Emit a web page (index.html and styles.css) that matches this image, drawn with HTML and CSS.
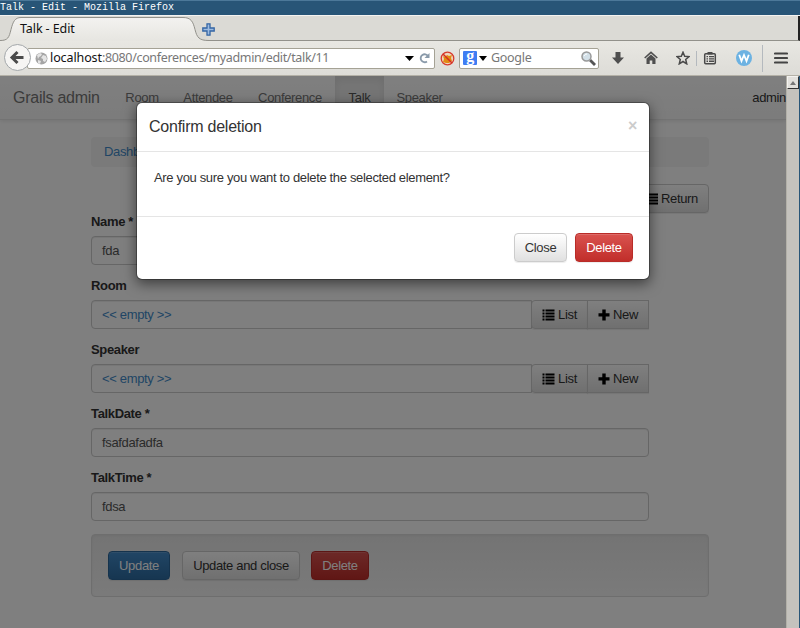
FILE: index.html
```html
<!DOCTYPE html>
<html lang="en">
<head>
<meta charset="utf-8">
<title>Talk - Edit</title>
<link rel="stylesheet" href="styles.css">
</head>
<body>
<svg class="defs" width="0" height="0">
  <symbol id="list" viewBox="0 0 12 12"><path d="M0 .5h2v2H0zM3 .5h9v2H3zM0 3.5h2v2H0zM3 3.5h9v2H3zM0 6.5h2v2H0zM3 6.5h9v2H3zM0 9.5h2v2H0zM3 9.5h9v2H3z"/></symbol>
  <symbol id="plus" viewBox="0 0 12 12"><path d="M4.3.5h3.4v3.8h3.8v3.2H7.7v4H4.3v-4H.5V4.3h3.8z"/></symbol>
  <linearGradient id="tabfill" x1="0" y1="0" x2="0" y2="1"><stop offset="0" stop-color="#f3f2f0"/><stop offset="1" stop-color="#e6e5e0"/></linearGradient>
</svg>
<div class="window">
  <div class="titlebar">Talk - Edit - Mozilla Firefox</div>
  <div class="tabstrip">
    <svg class="tabshape" width="210" height="26" viewBox="0 0 210 26"><path d="M0 24.5c8 0 9-3 11-11S15 1.500 21 1.500H183c8 0 10 4 12 12s4 11 14 11V26H0z" fill="url(#tabfill)"/><path d="M0 24.500c8 0 9-3 11-11S15 1.500 21 1.500H183c8 0 10 4 12 12s4 11 14 11" fill="none" stroke="#92918b"/></svg>
    <span class="tabtitle">Talk - Edit</span>
    <svg class="newtab" width="13" height="13" viewBox="0 0 13 13"><path d="M5 .8h3V5h4.200v3H8v4.200H5V8H.8V5H5z" fill="#9dbbe0" stroke="#3465a4" stroke-width="1.300"/></svg>
  </div>
  <div class="toolbar">
    <svg class="back" width="30" height="30" viewBox="0 0 30 30"><circle cx="14.500" cy="14.500" r="13" fill="#f6f5f3" stroke="#a3a7aa"/><path d="M9.500 14.500H20.500M14.500 9l-5.500 5.500 5.500 5.500" fill="none" stroke="#4b4b4b" stroke-width="3"/></svg>
    <div class="urlbar">
      <svg width="13" height="13" viewBox="0 0 13 13"><circle cx="6.500" cy="6.500" r="6" fill="#a5a5a5"/><path d="M2 3l3-2 2 1-1 2-2 1-1 2zM8 3l3 1 1 3-2 3-2-1V7L6 6zM3 8l3 1-1 3-2-1z" fill="#e4e4e4"/></svg>
      <span class="url"><b>localhost</b>:8080/conferences/myadmin/edit/talk/11</span>
      <svg width="9" height="5" viewBox="0 0 9 5"><path d="M0 0h9L4.500 5z"/></svg>
      <svg class="reload" width="12" height="12" viewBox="0 0 12 12"><path d="M8 9.500A4 4 0 1 1 9 4" fill="none" stroke="#8a9aaa" stroke-width="1.800"/><path d="M10.500 1v5H5.500z" fill="#8a9aaa"/></svg>
    </div>
    <svg class="blocker" width="15" height="15" viewBox="0 0 15 15"><circle cx="7.500" cy="7.500" r="6.300" fill="#efd6bd"/><path d="M3 5l2 1 2-2 2 1 3-1-1 3 1 3-3 2H6l-3-1 1-3z" fill="#e18a12"/><path d="M3 3l9 9" stroke="#d62d20" stroke-width="1.500"/><circle cx="7.500" cy="7.500" r="6.300" fill="none" stroke="#d63a2d" stroke-width="1.300"/></svg>
    <div class="search">
      <span class="glogo">g</span>
      <svg width="8" height="5" viewBox="0 0 8 5"><path d="M0 0h8L4 5z"/></svg>
      <span class="hint">Google</span>
      <svg width="15" height="15" viewBox="0 0 15 15"><path d="M9 9l5 5" stroke="#555" stroke-width="2.800"/><circle cx="5.500" cy="5.500" r="4.500" fill="#d3e0e8" stroke="#989898" stroke-width="1.500"/><path d="M3 5q1-2 3-2" fill="none" stroke="#fff"/></svg>
    </div>
    <div class="tools">
      <svg width="14" height="14" viewBox="0 0 14 14"><path d="M4.500 1h5v5.500H13L7 13 1 6.500h3.500z" fill="#4f4f4f"/></svg>
      <svg width="14" height="14" viewBox="0 0 14 14"><path d="M.7 7L7 1.300 13.300 7" fill="none" stroke="#4f4f4f" stroke-width="1.600"/><path d="M2.500 7.600L7 3.600l4.500 4V13H8.300V9.500H5.700V13H2.500z" fill="#4f4f4f"/></svg>
      <svg width="14" height="14" viewBox="0 0 14 14"><path d="M7 1.200l1.700 4 4.300.4-3.300 2.900 1 4.300L7 10.500l-3.700 2.300 1-4.300L1 5.600l4.300-.4z" fill="none" stroke="#4a4a4a" stroke-width="1.500"/></svg>
      <svg width="14" height="14" viewBox="0 0 14 14"><rect x="1.700" y="2.700" width="10.600" height="10" rx="1" fill="none" stroke="#4a4a4a" stroke-width="1.500"/><path d="M4.500 1h5v2.500h-5zM3.500 5h1.500v1.300H3.500zM6 5h5v1.300H6zM3.500 7.300h1.500v1.300H3.500zM6 7.300h5v1.300H6zM3.500 9.600h1.500v1.300H3.500zM6 9.600h5v1.300H6z" fill="#4a4a4a"/></svg>
      <svg width="16" height="16" viewBox="0 0 16 16"><circle cx="8" cy="8" r="8" fill="#6cb2e2"/><path d="M3.200 4.700L5.500 11 8 5l2.500 6 2.300-6.300" fill="none" stroke="#fff" stroke-width="1.800"/></svg>
      <svg class="menu" width="14" height="12" viewBox="0 0 14 12"><path d="M1 1.500h12M1 6h12M1 10.500h12" stroke="#444" stroke-width="2.200" stroke-linecap="round"/></svg>
      <i class="sep sep-a"></i><i class="sep sep-b"></i>
    </div>
  </div>
  <div class="viewport">
    <div class="page">
      <nav class="navbar">
        <span class="brand">Grails admin</span>
        <a class="n-room">Room</a><a class="n-att">Attendee</a><a class="n-conf">Conference</a><a class="n-talk active">Talk</a><a class="n-speak">Speaker</a>
        <span class="user">admin</span>
      </nav>
      <main class="container">
        <div class="breadcrumb">Dashboard</div>
        <div class="actions"><span class="btn"><svg width="12" height="12"><use href="#list"/></svg>Return</span></div>
        <form class="form">
          <label>Name *</label><div class="field">fda</div>
          <label>Room</label>
          <div class="group"><div class="field link">&lt;&lt; empty &gt;&gt;</div><span class="btn b-list"><svg width="13" height="12"><use href="#list"/></svg>List</span><span class="btn b-new"><svg width="12" height="12"><use href="#plus"/></svg>New</span></div>
          <label>Speaker</label>
          <div class="group"><div class="field link">&lt;&lt; empty &gt;&gt;</div><span class="btn b-list"><svg width="13" height="12"><use href="#list"/></svg>List</span><span class="btn b-new"><svg width="12" height="12"><use href="#plus"/></svg>New</span></div>
          <label>TalkDate *</label><div class="field">fsafdafadfa</div>
          <label>TalkTime *</label><div class="field">fdsa</div>
        </form>
        <div class="well"><span class="btn primary">Update</span><span class="btn upclose">Update and close</span><span class="btn danger">Delete</span></div>
      </main>
    </div>
    <div class="backdrop"></div>
    <div class="scrollbar"><div class="up"><svg width="6" height="4" viewBox="0 0 6 4"><path d="M0 4h6L3 0z" fill="#777"/></svg></div></div>
    <section class="modal">
      <header><h4>Confirm deletion</h4><span class="close">×</span></header>
      <p>Are you sure you want to delete the selected element?</p>
      <footer><span class="btn close-btn">Close</span><span class="btn danger">Delete</span></footer>
    </section>
  </div>
</div>
</body>
</html>
```
FILE: styles.css
```css
* { box-sizing: border-box; }
body { margin: 0; width: 800px; height: 628px; overflow: hidden; font: 13px/18px "Liberation Sans", sans-serif; letter-spacing: -.34px; color: #333; }
svg { flex: none; display: block; }
.defs { position: absolute; }
.window { width: 800px; height: 628px; display: flex; flex-direction: column; }
.titlebar { height: 16px; background: #285577; border-top: 1px solid #4c7899; border-bottom: 1px solid #f4f3f1; color: #fff; font: 10px/13px "Liberation Mono", monospace; letter-spacing: 0; white-space: pre; }
.tabstrip { height: 25px; background: #dbdad5; border-bottom: 1px solid #92918b; position: relative; border-right: 2px solid #222; }
.tabshape { position: absolute; left: 0; top: 0; }
.tabtitle { position: absolute; left: 20px; top: 4px; color: #111; font: 12.5px/17px "Noto Sans", sans-serif; letter-spacing: -.1px; }
.newtab { position: absolute; left: 202px; top: 7px; }
.toolbar { height: 35px; background: linear-gradient(#e8e7e2, #dddcd7); border-bottom: 1px solid #b4b1a7; display: flex; align-items: center; position: relative; }
.back { margin-left: 3px; z-index: 1; }
.urlbar { margin-left: -6px; width: 408px; height: 21px; background: #fff; border: 1px solid #a5a295; border-radius: 2px; display: flex; align-items: center; padding: 0 3px 0 7px; font: 12.5px/18px "Noto Sans", sans-serif; letter-spacing: -.34px; color: #777; }
.urlbar b { color: #111; font-weight: 400; letter-spacing: -.1px; }
.url { margin-left: 2px; width: 357px; white-space: nowrap; }
.reload { margin-left: 5px; }
.blocker { margin-left: 5px; }
.search { margin-left: 4px; width: 140px; height: 21px; background: #fff; border: 1px solid #a5a295; border-radius: 2px; display: flex; align-items: center; padding: 0 2px 0 3px; }
.glogo { width: 14px; height: 14px; margin-right: 2px; background: #3f7df3; color: #fff; border-radius: 1px; font: bold 16px/9px "Liberation Serif", serif; text-align: center; }
.hint { margin-left: 4px; flex: 1; color: #777; font: 12.5px/18px "Noto Sans", sans-serif; letter-spacing: -.3px; }
.tools { position: absolute; left: 600px; top: 0; width: 200px; height: 34px; display: grid; grid-template-columns: 36px 29px 36px 18px 49px 28px; justify-items: center; align-items: center; }
.menu { margin-right: 2px; }
.sep { position: absolute; width: 1px; background: #b4b9be; }
.sep-a { left: 96px; top: 10px; height: 15px; }
.sep-b { left: 162px; top: 4px; height: 27px; }
.viewport { height: 552px; position: relative; display: flex; overflow: hidden; }
.page { width: 786px; height: 552px; background: #fff; overflow: hidden; }
.backdrop { position: absolute; left: 0; top: 0; width: 786px; height: 552px; background: rgba(0,0,0,.5); }
.scrollbar { width: 14px; background: #c4c2bd; border-left: 1px solid #b2b0a8; border-right: 1px solid #285577; }
.up { height: 13px; background: #e2e0dc; border: 1px solid #f3f2ef; border-right-color: #333; border-bottom-color: #333; display: flex; align-items: center; justify-content: center; }
.navbar { height: 44px; background: linear-gradient(#fff, #f8f8f8); border-bottom: 1px solid #e7e7e7; box-shadow: 0 1px 4px rgba(0,0,0,.1); display: flex; line-height: 44px; color: #777; }
.brand { width: 113px; padding-left: 13px; font-size: 16px; letter-spacing: -.26px; }
.navbar a { text-align: center; }
.n-room { width: 58px; } .n-att { width: 74px; } .n-conf { width: 90px; } .n-talk { width: 49px; } .n-speak { width: 71px; }
.navbar .active { background: #ebebeb; color: #555; box-shadow: inset 0 3px 9px rgba(0,0,0,.075); }
.user { margin-left: auto; color: #333; }
.container { width: 618px; margin: 17px 0 0 91px; }
.breadcrumb { height: 30px; background: #f5f5f5; border-radius: 4px; color: #428bca; padding: 6px 13px; }
.actions { display: flex; justify-content: flex-end; margin-top: 17px; height: 29px; }
.btn { height: 29px; display: flex; align-items: center; justify-content: center; gap: 3px; padding: 0 10px; border: 1px solid #ccc; border-radius: 4px; background: linear-gradient(#fff, #e0e0e0); box-shadow: inset 0 1px 0 rgba(255,255,255,.15), 0 1px 1px rgba(0,0,0,.075); white-space: nowrap; }
.form { width: 558px; }
.form label { display: block; font-weight: 700; letter-spacing: -.35px; height: 18px; margin-bottom: 5px; }
.field { height: 29px; border: 1px solid #ccc; border-radius: 4px; padding: 5px 10px; color: #555; box-shadow: inset 0 1px 1px rgba(0,0,0,.075); margin-bottom: 12px; }
.group { display: flex; height: 29px; margin-bottom: 12px; }
.group .field { width: 441px; border-radius: 4px 0 0 4px; margin: 0; }
.field.link { color: #428bca; }
.b-list { width: 57px; padding: 0; margin-left: -1px; border-radius: 4px 0 0 4px; }
.b-new { width: 62px; padding: 0; margin-left: -1px; border-radius: 0; }
.well { margin-top: 13px; height: 63px; border: 1px solid #dcdcdc; border-radius: 4px; background: linear-gradient(#e8e8e8, #f5f5f5); padding: 16px; display: flex; gap: 12px; box-shadow: inset 0 1px 3px rgba(0,0,0,.05); }
.primary { width: 62px; background: linear-gradient(#428bca, #2d6ca2); border-color: #2b669a; color: #fff; }
.upclose { width: 118px; }
.danger { width: 58px; background: linear-gradient(#d9534f, #c12e2a); border-color: #b92c28; color: #fff; }
.well .danger { margin-left: -1px; }
.modal { position: absolute; left: 136px; top: 26px; width: 514px; height: 178px; background: #fff; border: 1px solid rgba(0,0,0,.3); background-clip: padding-box; border-radius: 6px; box-shadow: 0 4px 13px rgba(0,0,0,.5); }
.modal header { height: 49px; border-bottom: 1px solid #e5e5e5; display: flex; justify-content: space-between; padding: 15px 12px 0; }
.modal h4 { margin: 0; font-size: 16px; font-weight: 400; line-height: 18px; letter-spacing: -.24px; }
.close { font-size: 16px; font-weight: 700; color: #ccc; line-height: 15px; }
.modal p { margin: 0; height: 65px; padding: 17px; border-bottom: 1px solid #e5e5e5; }
.modal footer { display: flex; justify-content: flex-end; gap: 8px; padding: 16px 16px 0; }
.close-btn { width: 53px; }
```
